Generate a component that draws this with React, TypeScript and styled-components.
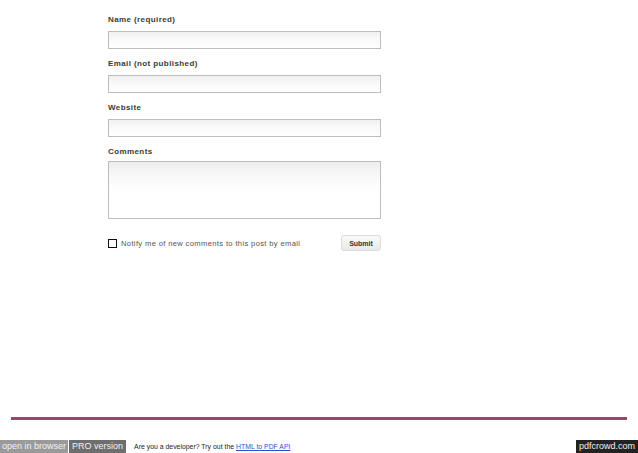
import styled, { createGlobalStyle } from "styled-components";

const GlobalStyle = createGlobalStyle`
  html, body {
    margin: 0;
    padding: 0;
    background: #fff;
  }
  body {
    font-family: "Liberation Sans", Arial, sans-serif;
  }
`;

/* pdf page with a comment form */
const App = () => {
  return (
    <Page>
      <GlobalStyle />
      <Form>
        <Label>Name (required)</Label>
        <Field />
        <Label>Email (not published)</Label>
        <Field />
        <Label>Website</Label>
        <Field />
        <Label $tight>Comments</Label>
        <Area />
        <Bottom>
          <Notify>
            <Check />
            Notify me of new comments to this post by email
          </Notify>
          <Submit>Submit</Submit>
        </Bottom>
      </Form>
      <Rule />
      <Footer>
        <Tag>open in browser</Tag>
        <Tag $dark>PRO version</Tag>
        <Promo>
          Are you a developer? Try out the <a href="#">HTML to PDF API</a>
        </Promo>
        <Brand>pdfcrowd.com</Brand>
      </Footer>
    </Page>
  );
};

export default App;

const Page = styled.div`
  width: 638px;
  height: 453px;
  display: flex;
  flex-direction: column;
  overflow: hidden;
`;

const Form = styled.div`
  display: flex;
  flex-direction: column;
  width: 273px;
  margin-left: 108px;
  padding-top: 14px;
`;

const Label = styled.div<{ $tight?: boolean }>`
  font-size: 8px;
  font-weight: 700;
  color: #3a3a3a;
  letter-spacing: 0.4px;
  line-height: 11px;
  margin-bottom: ${(p) => (p.$tight ? "4px" : "6px")};
`;

const Field = styled.div`
  height: 16px;
  border: 1px solid #bdbdbd;
  background: linear-gradient(180deg, #f0f0f0 0%, #fbfbfb 60%, #fff 100%);
  margin-bottom: 9px;
`;

const Area = styled.div`
  height: 56px;
  border: 1px solid #bdbdbd;
  background: linear-gradient(180deg, #ededed 0%, #fafafa 30%, #fff 60%);
  margin-bottom: 16px;
`;

const Bottom = styled.div`
  display: flex;
  align-items: center;
  justify-content: space-between;
`;

const Notify = styled.div`
  display: flex;
  align-items: center;
  gap: 4px;
  font-size: 7.6px;
  color: #555;
  letter-spacing: 0.35px;
`;

const Check = styled.span`
  width: 7px;
  height: 7px;
  border: 1px solid #111;
  background: #fff;
`;

const Submit = styled.div`
  width: 38px;
  height: 14px;
  border: 1px solid #dcdcdc;
  border-radius: 3px;
  background: linear-gradient(180deg, #fafafa 0%, #e9e9e9 100%);
  font-size: 7px;
  font-weight: 700;
  color: #333;
  display: flex;
  align-items: center;
  justify-content: center;
`;

const Rule = styled.div`
  height: 3px;
  margin: auto 11px 0 11px;
  background: #a0426f;
`;

const Footer = styled.div`
  display: flex;
  align-items: center;
  height: 13px;
  margin-top: 20px;
  font-size: 9px;
`;

const Tag = styled.span<{ $dark?: boolean }>`
  height: 13px;
  line-height: 13px;
  padding: 0 ${(p) => (p.$dark ? "3px" : "2px")};
  background: ${(p) => (p.$dark ? "#6e6e6e" : "#9a9a9a")};
  color: #f2f2f2;
  margin-right: 1px;
`;

const Promo = styled.span`
  margin-left: 7px;
  font-size: 6.9px;
  color: #222;

  a {
    color: #3450c8;
  }
`;

const Brand = styled.span`
  margin-left: auto;
  height: 13px;
  line-height: 13px;
  padding: 0 3px;
  background: #222;
  color: #f0f0f0;
`;
